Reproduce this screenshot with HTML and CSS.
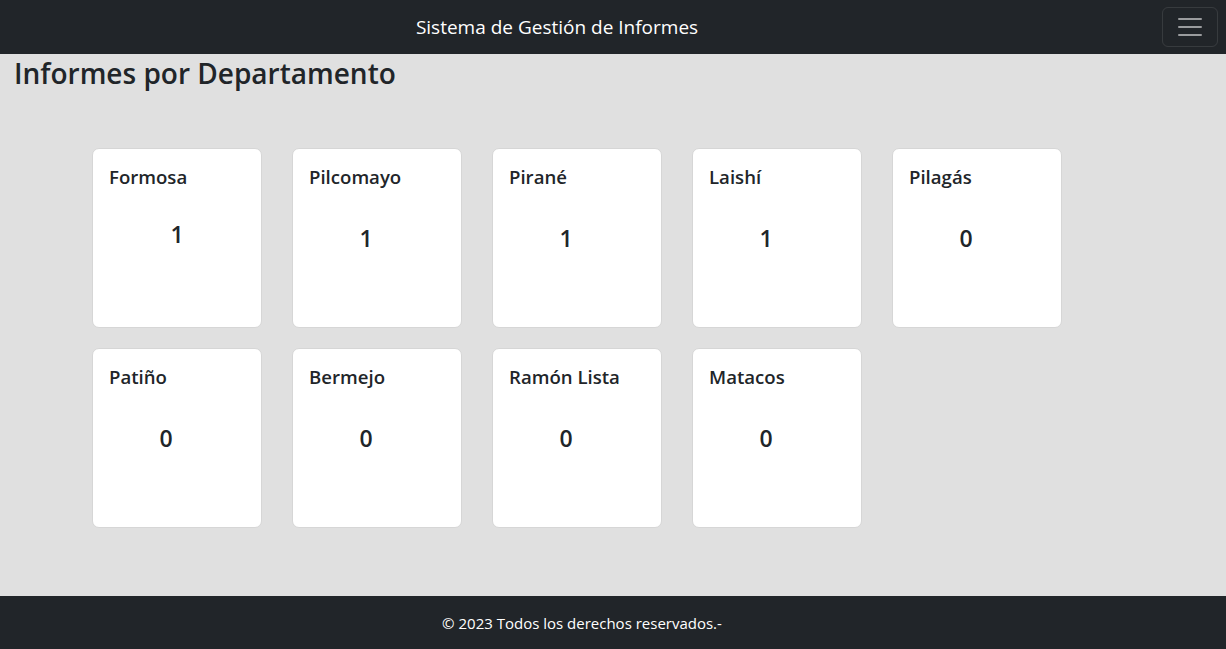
FILE: index.html
```html
<!DOCTYPE html>
<html lang="es">
<head>
<meta charset="utf-8">
<title>Sistema de Gestión de Informes</title>
<link rel="stylesheet" href="styles.css">
</head>
<body>
<nav class="navbar">
  <span class="brand">Sistema de Gestión de Informes</span>
  <button class="toggler" type="button" aria-label="Menú">
    <svg width="30" height="30" viewBox="0 0 30 30"><path d="M4 7h22M4 15h22M4 23h22" stroke="rgba(255,255,255,0.55)" stroke-width="2" stroke-linecap="round"/></svg>
  </button>
</nav>
<main class="main">
  <h3 class="page-title">Informes por Departamento</h3>
  <div class="grid">
    <div class="card"><h5 class="card-title">Formosa</h5><h4 class="count count-first">1</h4></div>
    <div class="card"><h5 class="card-title">Pilcomayo</h5><h4 class="count">1</h4></div>
    <div class="card"><h5 class="card-title">Pirané</h5><h4 class="count">1</h4></div>
    <div class="card"><h5 class="card-title">Laishí</h5><h4 class="count">1</h4></div>
    <div class="card"><h5 class="card-title">Pilagás</h5><h4 class="count">0</h4></div>
    <div class="card"><h5 class="card-title">Patiño</h5><h4 class="count">0</h4></div>
    <div class="card"><h5 class="card-title">Bermejo</h5><h4 class="count">0</h4></div>
    <div class="card"><h5 class="card-title">Ramón Lista</h5><h4 class="count">0</h4></div>
    <div class="card"><h5 class="card-title">Matacos</h5><h4 class="count">0</h4></div>
  </div>
</main>
<footer class="footer">
  <p class="footer-text">© 2023 Todos los derechos reservados.-</p>
</footer>
</body>
</html>
```
FILE: styles.css
```css
* { box-sizing: border-box; }
html, body { height: 100%; }
body {
  margin: 0;
  font-family: "Open Sans", "Noto Sans", sans-serif;
  color: #212529;
  background: #e0e0e0;
  display: flex;
  flex-direction: column;
}
.navbar {
  background: #212529;
  height: 54px;
  display: flex;
  align-items: center;
  padding: 0 8px 0 12px;
}
.brand {
  flex: 1;
  text-align: center;
  margin-right: 60px;
  color: #fff;
  font-size: 19px;
  line-height: 30px;
}
.toggler {
  width: 56px;
  height: 40px;
  background: transparent;
  border: 1px solid rgba(255,255,255,0.1);
  border-radius: 6px;
  display: flex;
  align-items: center;
  justify-content: center;
  padding: 0;
}
.toggler svg { display: block; }
.main {
  flex: 1;
  padding: 0 14px;
}
.page-title {
  margin: 3px 0 0;
  font-size: 28px;
  font-weight: 600;
  line-height: 1.2;
}
.grid {
  display: grid;
  grid-template-columns: repeat(5, 170px);
  grid-auto-rows: 180px;
  column-gap: 30px;
  row-gap: 20px;
  margin: 57px 0 0 78px;
}
.card {
  height: 180px;
  background: #fff;
  border: 1px solid #d6d6d6;
  border-radius: 7px;
  padding: 16px 16px 16px;
}
.card-title {
  margin: 0;
  font-size: 18.6px;
  font-weight: 600;
  line-height: 24px;
}
.count {
  margin: 35px 0 0;
  padding-right: 22px;
  text-align: center;
  font-size: 23px;
  font-weight: 600;
  line-height: 29px;
}
.count-first {
  margin-top: 31px;
  padding-right: 0;
}
.footer {
  background: #212529;
  height: 53px;
  display: flex;
  align-items: center;
  justify-content: center;
  padding-right: 62px;
}
.footer-text {
  margin: 0;
  color: #fff;
  font-size: 15px;
}
```
